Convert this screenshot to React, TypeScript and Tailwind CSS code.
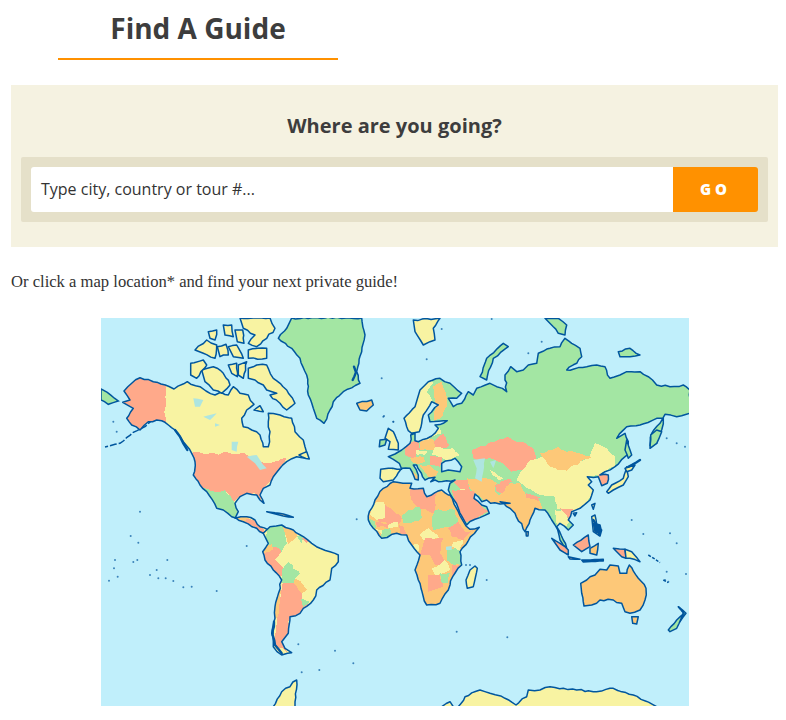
type Origin = [number, number];

// map crops: every coordinate below is measured at 3x from one of these corners
const NA: Origin = [100, 315];
const EA: Origin = [390, 315];
const SA: Origin = [100, 510];
const OC: Origin = [390, 510];
const EU: Origin = [360, 400];
const AF: Origin = [360, 490];
const AS: Origin = [500, 430];

const GREEN = "#a3e6a3";
const YELLOW = "#f8f3a2";
const ORANGE = "#fdc878";
const SALMON = "#ffa98a";
const WATER = "#c0effb";
const COAST = "#00569e";
const LAKE = "#aee5e0";

// small repeatable wobble so straight runs between measured points read as coast
const noise = (x: number, y: number) => {
  const v = Math.sin(x * 12.9898 + y * 78.233) * 43758.5453;
  return (v - Math.floor(v)) * 2 - 1;
};

const pts = (o: Origin, s: string, amp = 0.9) => {
  const list = s
    .trim()
    .split(/\s+/)
    .map((p) => {
      const [x, y] = p.split(",").map(Number);
      return [o[0] + x / 3 - 101, o[1] + y / 3 - 318];
    });
  const out: string[] = [];
  list.forEach(([x, y], i) => {
    const next = list[i + 1];
    out.push(`${x.toFixed(1)},${y.toFixed(1)}`);
    if (!next) return;
    const steps = Math.floor(Math.hypot(next[0] - x, next[1] - y) / 4);
    for (let k = 1; k < steps; k++) {
      const t = k / steps;
      const px = x + (next[0] - x) * t;
      const py = y + (next[1] - y) * t;
      out.push(`${(px + noise(px, py) * amp).toFixed(1)},${(py + noise(py, px) * amp).toFixed(1)}`);
    }
  });
  return out.join(" ");
};

type Patch = [string, Origin, string];

interface LandProps {
  id: string;
  outline: string;
  fill: string;
  patches?: Patch[];
}

const Land = ({ id, outline, fill, patches = [] }: LandProps) => (
  <g>
    <clipPath id={id}>
      <polygon points={outline} />
    </clipPath>
    <polygon points={outline} fill={fill} />
    <g clipPath={`url(#${id})`} shapeRendering="crispEdges">
      {patches.map(([c, o, s], i) => (
        <polygon key={i} points={pts(o, s, 1.3)} fill={c} />
      ))}
    </g>
    <polygon points={outline} fill="none" stroke={COAST} strokeWidth="1.5" strokeLinejoin="round" />
  </g>
);

const northAmerica = pts(NA, "68,262 90,255 72,228 95,205 120,188 160,200 196,210 222,222 262,200 300,215 318,228 345,240 362,232 385,240 400,215 420,235 445,240 462,268 440,285 425,310 430,335 455,345 480,360 490,395 505,395 510,350 505,320 505,295 540,300 575,310 585,350 610,375 615,395 625,430 590,425 560,440 540,460 520,485 510,510 490,520 480,540 492,565 480,555 470,540 440,535 420,545 405,565 415,590") +
  " " + pts(SA, "405,25 440,20 465,30 480,50 505,60 490,70 470,55 430,35 395,20 370,0") +
  " " + pts(NA, "350,580 320,530 300,510 280,480 285,440 275,415 250,380 225,345 195,322 170,315 145,320 120,345 95,330 80,310 100,280");

const eurasia = pts(EU, "62,208 85,205 125,208 118,190 100,178 85,170 105,162 125,150 150,130 152,105 165,100 165,122 175,125 215,108 235,85 225,75 250,70 262,62 250,62 210,65 205,45 235,15 215,5 190,45 185,70 178,95 155,100 140,80 132,55 165,20") +
  " " + pts(EA, "90,225 115,200 150,190 180,205 215,235 200,250 175,250 190,275 215,265 235,230 250,240 260,220 300,205 320,215 350,230 345,180 362,155 380,170 400,165 415,150 440,145 445,115 480,100 510,95 525,70 545,85 570,100 575,125 560,145 530,165 590,155 620,150 645,155 660,190 690,180 710,170 750,170 775,185 800,210 840,215 880,210 900,225 900,295 860,305 825,298 810,325 785,355 780,392 800,385 815,345 820,310 800,310 750,330 710,335 680,370") +
  " " + pts(AS, "375,10 385,35 388,70 345,110 315,125 300,135 325,135 322,160 305,167 295,140 262,140 275,155 265,165 280,180 270,210 240,235 215,245 205,270 220,285 205,300 180,280 170,290 190,330 200,355 180,330 165,285 155,270 135,240 105,235 75,305 45,250 30,235 0,215") +
  " " + pts(AF, "450,40 420,42 392,40 380,30 365,35 345,12 342,25 365,45 380,50 388,70 345,88 320,105 312,90 295,55 272,15 265,0") +
  " " + pts(EU, "270,250 285,240 235,245 225,240 212,245 225,232 205,235 195,240 170,195 160,195 175,225 175,240 165,238 150,205 125,205 115,218 100,240 70,245 60,235");

const africa = pts(AF, "265,15 245,0 200,20 190,-5 150,-5 155,-20 100,-25 70,-5 45,30 28,65 25,90 40,115 65,145 110,130 140,135 155,165 180,195 165,240 175,270 190,320 200,345 240,340 265,300 278,260 305,225 300,185 358,112 330,118 318,108 295,65 270,15");

const southAmerica = pts(SA, "490,70 510,50 545,45 580,60 610,80 635,100 660,115 690,125 715,135 715,155 695,175 690,210 650,240 640,270 610,295 600,310 570,320 565,370 545,395 555,415 575,428 545,435 520,410 515,370 525,325 525,290 545,210 520,180 495,150 488,125 505,100");

const australia = pts(OC, "572,220 590,210 615,195 630,178 650,180 660,165 685,168 690,190 710,190 718,165 745,205 768,235 765,270 750,300 720,310 705,305 695,280 670,270 630,270 605,285 582,288 575,250");

const islands: [string, string][] = [
  // arctic canada
  [YELLOW, pts(NA, "445,160 470,150 500,150 520,190 560,225 585,265 560,285 540,265 510,240 530,235 500,225 490,210 465,195 445,190")],
  [YELLOW, pts(NA, "305,165 340,155 370,175 390,210 365,235 340,225 315,200")],
  [YELLOW, pts(NA, "272,145 310,135 320,150 290,190 272,180")],
  [YELLOW, pts(NA, "385,150 410,145 412,185 395,175")],
  [YELLOW, pts(NA, "415,150 440,140 430,190 415,180")],
  [YELLOW, pts(NA, "420,9 510,9 525,40 500,70 470,95 445,85 465,60 430,40")],
  [YELLOW, pts(NA, "445,105 500,100 500,130 445,130")],
  [YELLOW, pts(NA, "285,105 320,75 350,90 345,130 310,115")],
  [YELLOW, pts(NA, "370,30 395,30 400,65 375,60")],
  [YELLOW, pts(NA, "325,50 350,45 345,75 330,70")],
  [YELLOW, pts(NA, "385,95 410,90 430,130 400,125")],
  [YELLOW, pts(NA, "405,45 428,45 432,85 412,80")],
  [YELLOW, pts(NA, "352,95 378,88 385,120 360,125")],
  [YELLOW, pts(NA, "462,285 490,290 480,272")],
  [YELLOW, pts(NA, "597,420 620,410 628,432 605,425")],
  // greenland, iceland, uk
  [GREEN, pts(NA, "575,9 785,9 795,60 785,110 770,170 780,205 730,230 700,260 690,285 672,325 650,310 640,280 625,240 620,180 600,130 575,100 535,70 560,40")],
  [ORANGE, pts(NA, "770,265 815,255 820,270 800,288 780,285")],
  [YELLOW, pts(EU, "85,85 100,95 115,130 115,150 85,148 90,125 75,115", 0.4)],
  [GREEN, pts(EU, "60,120 80,118 75,135 58,140", 0.4)],
  // arctic russia
  [YELLOW, pts(EA, "70,15 150,10 130,40 135,75 120,80 100,90 75,50")],
  [GREEN, pts(EA, "270,185 290,130 340,85 355,95 310,130 290,195")],
  [GREEN, pts(EA, "465,10 505,10 530,30 525,60 505,55 490,35")],
  [GREEN, pts(EA, "685,110 720,100 750,120 720,125 690,125")],
  // east asia
  [YELLOW, pts(AS, "320,185 335,165 370,145 380,110 385,140 370,165 340,180 325,190", 0.4)],
  [YELLOW, pts(AS, "375,115 405,105 395,120 380,125", 0.4)],
  [GREEN, pts(AS, "380,30 395,75 385,85 375,60", 0.4)],
  [GREEN, pts(AS, "450,55 452,15 470,0 485,5 470,40", 0.4)],
  [YELLOW, pts(AS, "275,225 285,220 280,238", 0.2)],
  [YELLOW, pts(AS, "220,250 230,248 225,258", 0.2)],
  [YELLOW, pts(AS, "275,260 285,255 290,285 305,300 300,318 280,305", 0.4)],
  [COAST, pts(AS, "280,280 300,285 300,310 285,305")],
  [ORANGE, pts(OC, "408,65 415,65 414,78 409,78", 0.2)],
  // indonesia
  [SALMON, pts(OC, "485,85 510,100 535,120 535,135 510,120", 0.4)],
  [SALMON, pts(OC, "550,105 595,75 600,110 575,125", 0.4)],
  [SALMON, pts(OC, "535,140 570,148 540,147", 0.2)],
  [ORANGE, pts(OC, "600,115 625,100 620,135 600,130", 0.4)],
  [COAST, pts(OC, "575,150 640,148 640,153 580,156", 0.2)],
  [SALMON, pts(OC, "670,115 705,118 708,145 695,140 680,125", 0.4)],
  [YELLOW, pts(OC, "705,118 725,125 750,155 720,145 708,145", 0.4)],
  // pacific
  [ORANGE, pts(OC, "725,320 745,320 740,342 728,340", 0.3)],
  [GREEN, pts(OC, "865,290 888,310 870,335 880,308", 0.3)],
  [GREEN, pts(OC, "835,360 860,330 880,312 860,355 840,365", 0.3)],
  // madagascar, caribbean
  [YELLOW, pts(AF, "345,228 352,235 340,290 322,295 318,270 330,240", 0.4)],
  [ORANGE, pts(SA, "500,5 550,12 580,22 550,18", 0.2)],
  // antarctica
  [YELLOW, pts(OC, "205,590 225,560 270,540 300,550 345,565 378,585 410,560 415,540 450,540 480,530 520,535 560,540 610,545 670,535 730,555 800,590")],
  [YELLOW, pts(OC, "155,590 180,575 190,590")],
  [YELLOW, pts(SA, "520,590 545,545 590,510 585,590")],
];

const seas: string[] = [
  pts(EU, "245,190 285,175 305,200 300,215 265,210 245,215"),
];

const lakes: string[] = [
  pts(NA, "280,250 310,255 300,275 285,275", 0.5),
  pts(NA, "310,305 350,295 330,315", 0.5),
  pts(NA, "345,325 360,330 345,335", 0.5),
  pts(NA, "395,380 415,380 410,410 395,405", 0.5),
  pts(NA, "440,425 470,420 480,435 500,460 480,465 465,445", 0.5),
  pts(EA, "250,435 285,430 275,500 255,490 260,460", 0.5),
  pts(EA, "300,440 318,435 310,460", 0.5),
  pts(AF, "258,170 275,168 275,180 258,180", 0.5),
];

// thick clusters of fjords and tiny islands where the coast line closes up
const darkCoast: string[] = [
  pts(NA, "225,345 240,365 250,385 262,405", 0.3),
  pts(NA, "762,155 768,172 758,195", 0.5),
  pts(SA, "522,335 518,375 525,405 545,430", 0.5),
  pts(OC, "610,30 625,50 628,75", 0.5),
  pts(AS, "420,90 385,110", 0.3),
];

const chains: string[] = [
  pts(OC, "775,135 810,158", 0.3),
  pts(OC, "820,210 835,218", 0.3),
  pts(OC, "865,290 885,312", 0.3),
];

const specks: [Origin, number, number][] = [
  [SA, 92, 78], [SA, 115, 98], [SA, 42, 175], [SA, 27, 212], [SA, 53, 200], [SA, 45, 150], [SA, 100, 156],
  [SA, 112, 150], [SA, 202, 150], [SA, 170, 180], [SA, 150, 195], [SA, 175, 205], [SA, 197, 205], [SA, 220, 213],
  [SA, 250, 232], [SA, 275, 230], [SA, 350, 243], [SA, 595, 403], [SA, 705, 422], [SA, 440, 108], [SA, 120, 5],
  [SA, 770, 28], [SA, 658, 480], [SA, 760, 460], [SA, 605, 487],
  [NA, 845, 190], [NA, 850, 305], [NA, 880, 320], [NA, 40, 320], [NA, 50, 350],
  [OC, 290, 210], [OC, 200, 365], [OC, 352, 382], [OC, 830, 185],
  [OC, 825, 210], [OC, 835, 215], [OC, 888, 192], [OC, 840, 70], [OC, 860, 100], [OC, 760, 72], [OC, 725, 30],
  [OC, 240, 165], [OC, 228, 165], [EA, 110, 133], [EA, 155, 42], [EA, 305, 12], [EA, 455, 80], [EA, 415, 115],
  [EA, 830, 370], [EA, 860, 385], [EA, 885, 395], [EU, 72, 48], [EU, 100, 65],
];

const WorldMap = () => (
  <svg viewBox="0 0 588 388" className="block w-[588px] h-[388px]">
    <rect width="588" height="388" fill={WATER} />
    {/* aleutians */}
    <polyline points={pts(NA, "160,312 135,335 100,352 60,385 15,396", 0.4)} fill="none" stroke={COAST} strokeWidth="1.5" strokeDasharray="7 2" />
    <polygon points={pts(NA, "3,222 22,232 55,258 25,268 3,255", 0.5)} fill={GREEN} stroke={COAST} strokeWidth="1.5" />
    <Land
      id="na"
      outline={northAmerica}
      fill={YELLOW}
      patches={[
        [SALMON, NA, "50,160 196,160 196,322 240,400 50,400"],
        [SALMON, NA, "270,415 435,415 470,440 510,445 560,428 540,460 520,490 490,520 480,540 495,570 465,535 420,545 400,560 375,525 345,530 300,520 270,470"],
        [GREEN, NA, "285,510 345,530 375,525 405,565 420,640 370,640 330,570"],
        [ORANGE, SA, "405,20 440,20 450,30 430,36"],
        [SALMON, SA, "440,25 480,40 495,70 470,58 435,36"],
      ]}
    />
    <Land
      id="sa"
      outline={southAmerica}
      fill={YELLOW}
      patches={[
        [GREEN, SA, "500,70 510,45 550,50 560,100 545,125 520,112 490,110"],
        [ORANGE, SA, "548,50 585,60 592,80 565,102"],
        [GREEN, SA, "590,78 610,78 605,100"],
        [SALMON, SA, "605,83 628,85 620,100"],
        [SALMON, SA, "485,130 520,110 545,125 525,150 550,175 545,198 520,185 490,150"],
        [ORANGE, SA, "485,112 515,103 520,118 490,128"],
        [GREEN, SA, "565,155 600,190 585,205 580,222 548,222 545,180"],
        [ORANGE, SA, "585,205 610,225 622,240 605,250 580,222"],
        [SALMON, SA, "548,220 580,220 605,250 605,265 630,290 600,315 570,325 565,375 545,398 560,425 525,405 530,330"],
        [ORANGE, SA, "545,215 520,290 520,328 535,320"],
        [GREEN, SA, "602,265 628,275 610,292"],
      ]}
    />
    <Land
      id="ea"
      outline={eurasia}
      fill={GREEN}
      patches={[
        // north europe
        [YELLOW, EA, "30,320 55,280 85,220 120,190 130,205 110,230 130,262 105,300 100,350 55,350"],
        [ORANGE, EA, "130,215 155,200 170,260 160,300 130,320 135,262"],
        // west and central europe
        [YELLOW, EU, "55,205 125,205 110,225 100,245 70,250 55,240"],
        [SALMON, EU, "135,132 175,122 180,150 165,175 135,165"],
        [ORANGE, EU, "180,122 220,118 225,150 180,150"],
        [SALMON, EU, "222,125 250,102 268,135 245,146 225,140"],
        [YELLOW, EU, "225,140 280,145 300,165 260,180 240,172 215,165"],
        [YELLOW, EU, "168,150 205,155 195,165 170,165"],
        [ORANGE, EU, "150,175 190,170 195,185 160,190"],
        [SALMON, EU, "210,168 245,172 240,200 210,195"],
        [ORANGE, EU, "178,195 210,195 235,215 215,235 205,230"],
        [YELLOW, EU, "195,100 240,85 245,100 215,112 180,125"],
        [ORANGE, EU, "150,205 175,230 175,245 160,235"],
        // central asia
        [SALMON, EA, "245,405 315,380 355,365 380,380 400,380 430,400 440,430 400,465 365,470 340,445 300,430 270,440 250,430"],
        [YELLOW, EA, "300,465 340,490 320,500 290,480"],
        [GREEN, EA, "270,470 300,465 330,500 300,505"],
        [ORANGE, EA, "230,490 290,490 320,505 315,530 350,570 300,575 270,545 240,520"],
        [SALMON, EA, "315,510 360,490 372,510 345,545 320,530"],
        [GREEN, EA, "360,500 395,500 375,545 365,570 340,560 345,545"],
        [SALMON, EA, "190,500 235,495 240,525 220,530"],
        [YELLOW, EA, "205,520 240,525 260,545 230,540"],
        // arabia
        [SALMON, AF, "275,0 345,5 345,30 388,62 340,92 315,100 290,50"],
        // south and east asia
        [ORANGE, AS, "-15,210 30,160 60,160 75,190 130,210 125,238 105,238 75,310 45,255 30,240 0,220"],
        [SALMON, AS, "78,190 130,205 125,215 78,203"],
        [YELLOW, AS, "50,150 90,90 125,80 150,110 200,122 240,95 270,85 285,40 320,55 345,80 345,110 310,125 295,135 265,140 285,185 240,240 215,245 190,240 170,235 165,205 120,195 70,165"],
        [ORANGE, AS, "120,70 175,50 200,65 240,70 275,80 240,95 200,122 150,110 125,80"],
        [GREEN, AS, "115,205 165,200 170,238 165,290 150,275 135,242 125,228"],
        [YELLOW, AS, "165,240 190,240 210,270 190,305 170,285"],
        [SALMON, AS, "178,235 218,238 205,268 190,245"],
        [SALMON, AS, "295,135 325,122 325,165 305,168"],
      ]}
    />
    <Land
      id="af"
      outline={africa}
      fill={ORANGE}
      patches={[
        [YELLOW, AF, "40,40 70,35 80,80 50,90 30,75"],
        [SALMON, AF, "75,45 125,85 120,100 90,105 50,90 75,85"],
        [SALMON, AF, "155,-25 230,10 225,70 170,50 150,10"],
        [GREEN, AF, "125,75 180,50 185,85 150,100 130,100"],
        [GREEN, AF, "225,60 285,60 295,100 260,110 220,120 215,85"],
        [SALMON, AF, "295,95 315,125 340,120 310,150 275,140 265,115"],
        [SALMON, AF, "115,105 120,130 140,135 130,110"],
        [YELLOW, AF, "180,135 205,115 240,145 190,150"],
        [SALMON, AF, "195,145 250,145 240,190 255,215 225,225 210,195 180,195"],
        [GREEN, AF, "260,180 300,170 305,225 280,225 260,210"],
        [YELLOW, AF, "280,155 310,150 300,185 275,170"],
        [YELLOW, AF, "215,235 255,210 270,240 225,255"],
        [SALMON, AF, "205,255 240,255 250,290 205,305"],
        [GREEN, AF, "240,250 270,248 265,280 245,280"],
        [SALMON, AF, "275,225 310,222 280,268 275,245"],
        [GREEN, AF, "20,85 45,95 45,120 25,110"],
        [SALMON, AF, "48,95 95,105 85,115 50,110"],
        [YELLOW, AF, "85,105 115,95 115,110 85,115"],
        [GREEN, AF, "65,120 90,115 95,145 60,150"],
        [YELLOW, AF, "38,110 65,120 65,132"],
        [YELLOW, AF, "155,165 175,160 175,185 165,185"],
      ]}
    />
    <Land id="au" outline={australia} fill={ORANGE} />
    {islands.map(([fill, p], i) => (
      <polygon key={i} points={p} fill={fill} stroke={COAST} strokeWidth="1.5" strokeLinejoin="round" />
    ))}
    {seas.map((p, i) => (
      <polygon key={i} points={p} fill={WATER} stroke={COAST} strokeWidth="1.5" strokeLinejoin="round" />
    ))}
    {lakes.map((p, i) => (
      <polygon key={i} points={p} fill={LAKE} />
    ))}
    {darkCoast.map((p, i) => (
      <polyline key={i} points={p} fill="none" stroke={COAST} strokeWidth="2.4" strokeLinecap="round" />
    ))}
    {chains.map((p, i) => (
      <polyline key={i} points={p} fill="none" stroke={COAST} strokeWidth="1.5" strokeDasharray="3 1.5" />
    ))}
    {specks.map(([o, x, y], i) => (
      <circle key={i} cx={o[0] + x / 3 - 101} cy={o[1] + y / 3 - 318} r="1" fill={COAST} fillOpacity="0.7" />
    ))}
  </svg>
);

export default function App() {
  return (
    <div className="bg-white h-[720px] overflow-hidden font-['Open_Sans',sans-serif] text-[#3d3d3d]">
      <div className="ml-[58px] w-[280px] h-[60px] border-b-2 border-[#ff9100] text-center">
        <h1 className="text-[28px] leading-[38px] pt-[9px] font-bold">Find A Guide</h1>
      </div>
      <div className="ml-[11px] mt-[25px] w-[767px] h-[162px] bg-[#f5f2e1] px-[10px] pt-[27px]">
        <h2 className="text-[20px] leading-[28px] font-bold text-center">Where are you going?</h2>
        <div className="mt-[17px] bg-[#e5e0c9] rounded-[2px] p-[10px] flex">
          <div className="flex-1 h-[45px] bg-white rounded-l-[3px] pl-[10px] pb-[2px] flex items-center text-[16px] text-[#333]">
            Type city, country or tour #...
          </div>
          <button className="w-[85px] h-[45px] pb-[1px] bg-[#ff9100] rounded-r-[3px] text-white font-extrabold text-[15px] tracking-[4px] text-center">
            GO
          </button>
        </div>
      </div>
      <p className="ml-[11px] mt-[24px] font-['Liberation_Serif',serif] text-[16.6px] leading-[22px] text-[#333]">
        Or click a map location* and find your next private guide!
      </p>
      <div className="ml-[101px] mt-[25px] w-[588px]">
        <WorldMap />
      </div>
    </div>
  );
}
